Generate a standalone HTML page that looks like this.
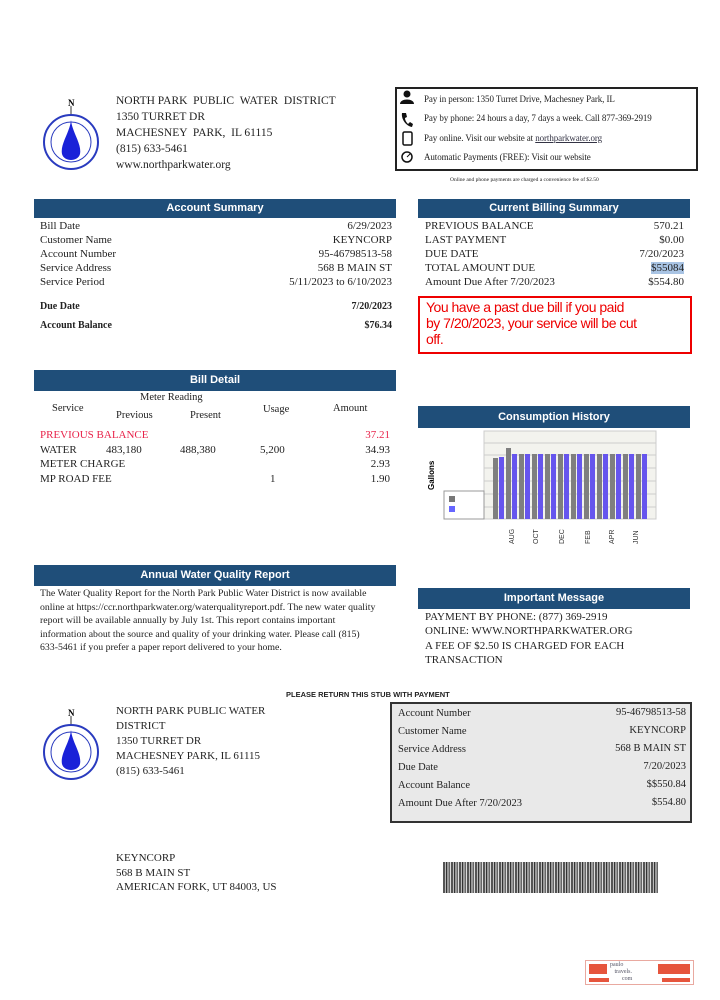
<!DOCTYPE html>
<html><head><meta charset="utf-8"><style>
body{margin:0;width:720px;height:1000px;background:#fff;position:relative;font-family:"Liberation Serif",serif;color:#222;overflow:hidden}
.a{position:absolute;white-space:nowrap}
.hd{position:absolute;background:#1f4e79;color:#fff;font:bold 11px "Liberation Sans",sans-serif;text-align:center;box-sizing:border-box}
.s{font-size:11px;line-height:14px}
.r{position:absolute;text-align:right}
</style></head><body>

<svg class="a" style="left:38px;top:96px" width="66" height="80" viewBox="0 0 66 80">
<text x="30" y="10" font-size="9" font-weight="bold" font-family="Liberation Serif">N</text>
<line x1="33" y1="10" x2="33" y2="22" stroke="#333" stroke-width="1"/>
<circle cx="33" cy="46" r="27" fill="#fff" stroke="#2a3bbf" stroke-width="2"/>
<circle cx="33" cy="46" r="20" fill="#fff" stroke="#2a3bbf" stroke-width="1"/>
<path d="M33 24 C34 36 44 48 42 58 C40 66 26 66 24 58 C22 48 32 36 33 24Z" fill="#1a22d8"/>
</svg>
<div class="a s" style="left:116px;top:93px;line-height:16px;font-size:11.5px">NORTH PARK &nbsp;PUBLIC &nbsp;WATER &nbsp;DISTRICT<br>1350 TURRET DR<br>MACHESNEY &nbsp;PARK, &nbsp;IL 61115<br>(815) 633-5461<br>www.northparkwater.org</div>

<div class="a" style="left:395px;top:87px;width:303px;height:84px;border:2px solid #222;box-sizing:border-box"></div>
<svg class="a" style="left:398px;top:89px" width="20" height="80" viewBox="0 0 20 80">
<circle cx="9" cy="5" r="3.5" fill="#111"/><path d="M2 15 C2 9 16 9 16 15Z" fill="#111"/>
<path d="M4 24 C3 30 8 37 14 38 L15 35 L12 33 L10 35 C8 33 7 31 7 29 L9 28 L8 24Z" fill="#111"/>
<rect x="5" y="43" width="9" height="13" rx="1.5" fill="none" stroke="#111" stroke-width="1.5"/>
<circle cx="9" cy="68" r="5" fill="none" stroke="#111" stroke-width="1.5"/><line x1="9" y1="68" x2="12" y2="65" stroke="#111"/>
</svg>
<div class="a" style="left:424px;top:90px;font-size:9px;line-height:19.3px;letter-spacing:-0.1px">Pay in person: 1350 Turret Drive, Machesney Park, IL<br>Pay by phone: 24 hours a day, 7 days a week. Call 877-369-2919<br>Pay online. Visit our website at <u style="color:#334">northparkwater.org</u><br>Automatic Payments (FREE): Visit our website</div>
<div class="a" style="left:450px;top:177px;font-size:5.5px">Online and phone payments are charged a convenience fee of $2.50</div>

<div class="hd" style="left:34px;top:199px;width:362px;height:19px;line-height:19px">Account Summary</div>
<div class="a s" style="left:40px;top:219px">Bill Date<br>Customer Name<br>Account Number<br>Service Address<br>Service Period</div>
<div class="r s" style="right:328px;top:219px">6/29/2023<br>KEYNCORP<br>95-46798513-58<br>568 B MAIN ST<br>5/11/2023 to 6/10/2023</div>
<div class="a" style="left:40px;top:297px;font-size:10px;font-weight:bold;line-height:19px">Due Date<br>Account Balance</div>
<div class="r" style="right:328px;top:297px;font-size:10px;font-weight:bold;line-height:19px">7/20/2023<br>$76.34</div>

<div class="hd" style="left:418px;top:199px;width:272px;height:19px;line-height:19px">Current Billing Summary</div>
<div class="a s" style="left:425px;top:219px">PREVIOUS BALANCE<br>LAST PAYMENT<br>DUE DATE<br>TOTAL AMOUNT DUE<br>Amount Due After 7/20/2023</div>
<div class="r s" style="right:36px;top:219px">570.21<br>$0.00<br>7/20/2023<br><span style="background:#a9c4e4">$55084</span><br>$554.80</div>
<div class="a" style="left:418px;top:296px;width:274px;height:58px;border:2px solid #e00;box-sizing:border-box;color:#e00;font:14px/16px 'Liberation Sans',sans-serif;padding:1px 6px;white-space:normal;letter-spacing:-0.5px">You have a past due bill if you paid<br>by 7/20/2023, your service will be cut<br>off.</div>

<div class="hd" style="left:34px;top:370px;width:362px;height:21px;line-height:21px">Bill Detail</div>
<div class="a" style="left:140px;top:392px;font-size:10.5px">Meter Reading</div>
<div class="a" style="left:52px;top:403px;font-size:10.5px">Service</div>
<div class="a" style="left:116px;top:410px;font-size:10.5px">Previous</div>
<div class="a" style="left:190px;top:410px;font-size:10.5px">Present</div>
<div class="a" style="left:263px;top:404px;font-size:10.5px">Usage</div>
<div class="a" style="left:333px;top:403px;font-size:10.5px">Amount</div>
<div class="a s" style="left:40px;top:428px;line-height:14.7px"><span style="color:#e8234a">PREVIOUS BALANCE</span><br>WATER<br>METER CHARGE<br>MP ROAD FEE</div>
<div class="a s" style="left:106px;top:442.7px">483,180</div>
<div class="a s" style="left:180px;top:442.7px">488,380</div>
<div class="a s" style="left:260px;top:442.7px">5,200</div>
<div class="a s" style="left:270px;top:472px">1</div>
<div class="r s" style="right:330px;top:428px;line-height:14.7px"><span style="color:#e8234a">37.21</span><br>34.93<br>2.93<br>1.90</div>

<div class="hd" style="left:418px;top:406px;width:272px;height:22px;line-height:22px">Consumption History</div>
<svg class="a" style="left:420px;top:428px" width="250" height="120" viewBox="0 0 250 120">
<text transform="translate(14,62) rotate(-90)" font-size="8" font-weight="bold" font-family="Liberation Sans">Gallons</text>
<rect x="64" y="3" width="172" height="88" fill="#f3f3ee" stroke="#ccc"/>
<g stroke="#ccc"><line x1="64" y1="15" x2="236" y2="15"/><line x1="64" y1="27" x2="236" y2="27"/><line x1="64" y1="40" x2="236" y2="40"/><line x1="64" y1="53" x2="236" y2="53"/><line x1="64" y1="66" x2="236" y2="66"/><line x1="64" y1="79" x2="236" y2="79"/></g>
<rect x="24" y="63" width="40" height="28" fill="#fff" stroke="#999"/>
<rect x="29" y="68" width="6" height="6" fill="#777"/><rect x="29" y="78" width="6" height="6" fill="#66f"/>
<g fill="#7f7f7f">
<rect x="73" y="30" width="5" height="61"/><rect x="86" y="20" width="5" height="71"/><rect x="99" y="26" width="5" height="65"/><rect x="112" y="26" width="5" height="65"/><rect x="125" y="26" width="5" height="65"/><rect x="138" y="26" width="5" height="65"/><rect x="151" y="26" width="5" height="65"/><rect x="164" y="26" width="5" height="65"/><rect x="177" y="26" width="5" height="65"/><rect x="190" y="26" width="5" height="65"/><rect x="203" y="26" width="5" height="65"/><rect x="216" y="26" width="5" height="65"/></g>
<g fill="#6655ee">
<rect x="79" y="29" width="5" height="62"/><rect x="92" y="26" width="5" height="65"/><rect x="105" y="26" width="5" height="65"/><rect x="118" y="26" width="5" height="65"/><rect x="131" y="26" width="5" height="65"/><rect x="144" y="26" width="5" height="65"/><rect x="157" y="26" width="5" height="65"/><rect x="170" y="26" width="5" height="65"/><rect x="183" y="26" width="5" height="65"/><rect x="196" y="26" width="5" height="65"/><rect x="209" y="26" width="5" height="65"/><rect x="222" y="26" width="5" height="65"/></g>
<g font-size="7" font-family="Liberation Sans" fill="#333">
<text transform="translate(94,116) rotate(-90)">AUG</text><text transform="translate(118,116) rotate(-90)">OCT</text><text transform="translate(144,116) rotate(-90)">DEC</text><text transform="translate(170,116) rotate(-90)">FEB</text><text transform="translate(194,116) rotate(-90)">APR</text><text transform="translate(218,116) rotate(-90)">JUN</text></g>
</svg>

<div class="hd" style="left:34px;top:565px;width:362px;height:21px;line-height:21px">Annual Water Quality Report</div>
<div class="a" style="left:40px;top:587px;width:340px;white-space:normal;font-size:9.8px;line-height:13.5px">The Water Quality Report for the North Park Public Water District is now available online at https://ccr.northparkwater.org/waterqualityreport.pdf. The new water quality report will be available annually by July 1st. This report contains important information about the source and quality of your drinking water. Please call (815) 633-5461 if you prefer a paper report delivered to your home.</div>

<div class="hd" style="left:418px;top:588px;width:272px;height:21px;line-height:21px">Important Message</div>
<div class="a" style="left:425px;top:610px;font-size:11px;line-height:14.3px">PAYMENT BY PHONE: (877) 369-2919<br>ONLINE: WWW.NORTHPARKWATER.ORG<br>A FEE OF $2.50 IS CHARGED FOR EACH<br>TRANSACTION</div>

<div class="a" style="left:286px;top:690px;font:bold 7.5px 'Liberation Sans',sans-serif">PLEASE RETURN THIS STUB WITH PAYMENT</div>

<svg class="a" style="left:38px;top:706px" width="66" height="80" viewBox="0 0 66 80">
<text x="30" y="10" font-size="9" font-weight="bold" font-family="Liberation Serif">N</text>
<line x1="33" y1="10" x2="33" y2="22" stroke="#333" stroke-width="1"/>
<circle cx="33" cy="46" r="27" fill="#fff" stroke="#2a3bbf" stroke-width="2"/>
<circle cx="33" cy="46" r="20" fill="#fff" stroke="#2a3bbf" stroke-width="1"/>
<path d="M33 24 C34 36 44 48 42 58 C40 66 26 66 24 58 C22 48 32 36 33 24Z" fill="#1a22d8"/>
</svg>
<div class="a" style="left:116px;top:704px;font-size:11px;line-height:15px">NORTH PARK PUBLIC WATER<br>DISTRICT<br>1350 TURRET DR<br>MACHESNEY PARK, IL 61115<br>(815) 633-5461</div>
<div class="a" style="left:390px;top:702px;width:302px;height:121px;background:#e9e9e9;border:2px solid #333;box-sizing:border-box"></div>
<div class="a" style="left:398px;top:705px;font-size:10.5px;line-height:18px">Account Number<br>Customer Name<br>Service Address<br>Due Date<br>Account Balance<br>Amount Due After 7/20/2023</div>
<div class="r" style="right:34px;top:704px;font-size:10.5px;line-height:18px">95-46798513-58<br>KEYNCORP<br>568 B MAIN ST<br>7/20/2023<br>$$550.84<br>$554.80</div>

<div class="a" style="left:116px;top:851px;font-size:11px;line-height:14.5px">KEYNCORP<br>568 B MAIN ST<br>AMERICAN FORK, UT 84003, US</div>

<div class="a" style="left:443px;top:862px;width:215px;height:31px;background:repeating-linear-gradient(90deg,#555 0 2px,#bbb 2px 3px,#333 3px 4px,#999 4px 6px,#666 6px 7px,#ddd 7px 8px)"></div>

<div class="a" style="left:585px;top:960px;width:109px;height:25px;border:1px solid #e9a9a0;box-sizing:border-box">
<div class="a" style="left:3px;top:3px;width:18px;height:10px;background:#e6553d"></div>
<div class="a" style="left:72px;top:3px;width:32px;height:10px;background:#e6553d"></div>
<div class="a" style="left:3px;top:17px;width:20px;height:4px;background:#e6553d"></div>
<div class="a" style="left:76px;top:17px;width:28px;height:4px;background:#e6553d"></div>
<div class="a" style="left:24px;top:1px;font-size:6px;line-height:7px;color:#556">paulo<br>&nbsp;&nbsp;&nbsp;travels.<br>&nbsp;&nbsp;&nbsp;&nbsp;&nbsp;&nbsp;&nbsp;&nbsp;com</div>
</div>
</body></html>
